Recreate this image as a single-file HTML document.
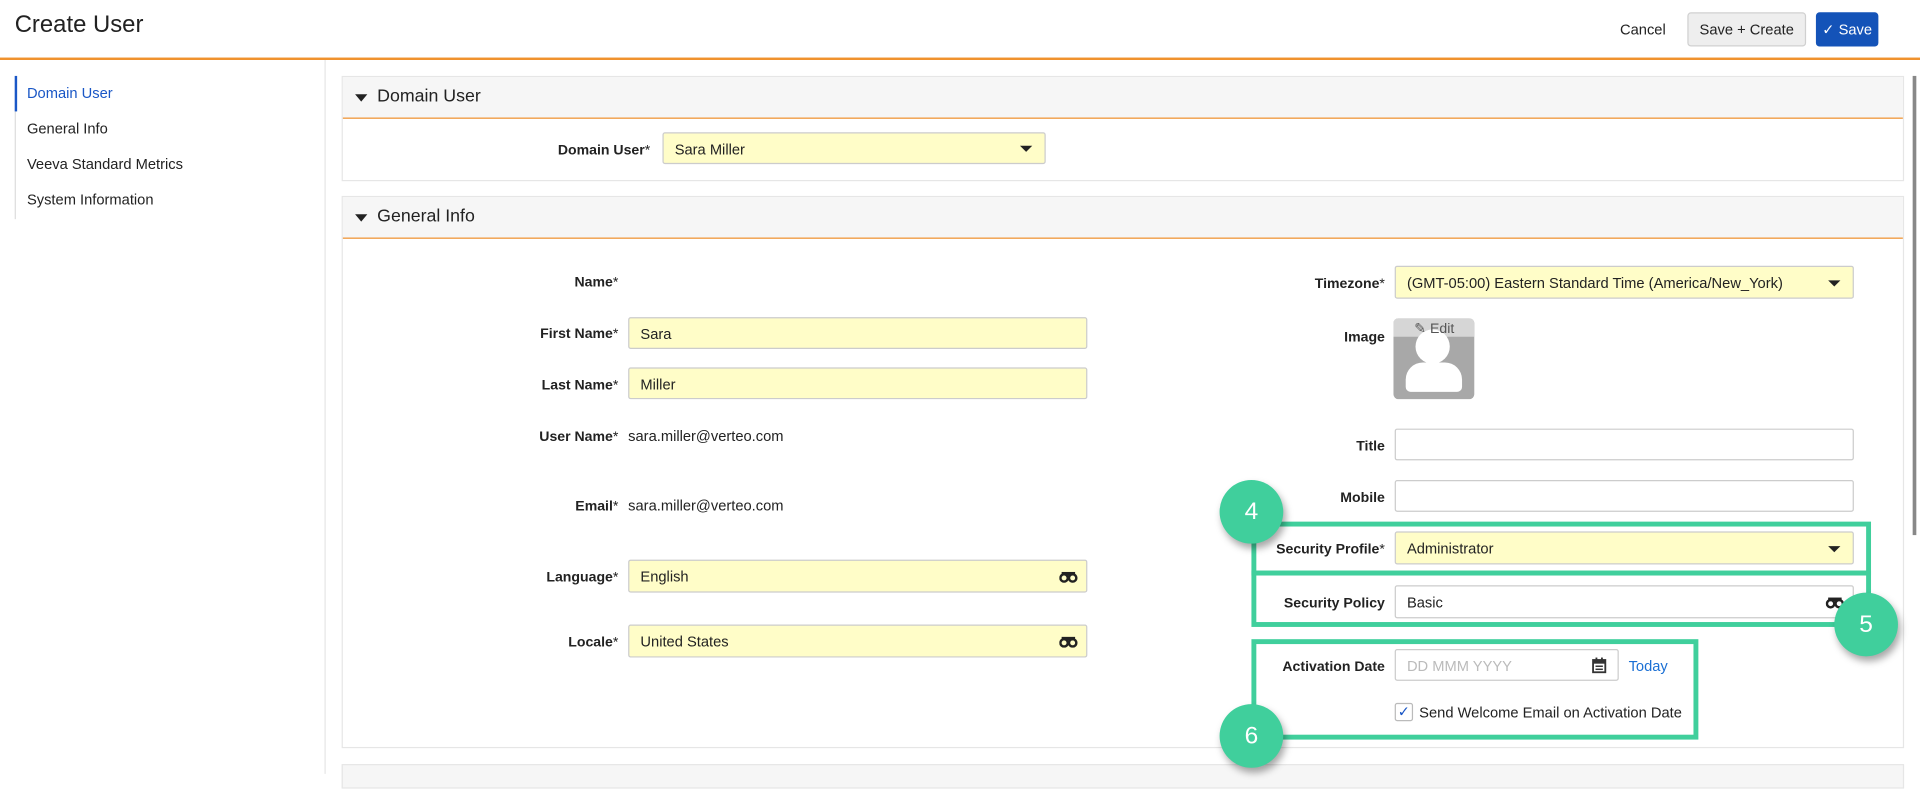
<!DOCTYPE html>
<html><head><meta charset="utf-8"><style>
html,body{margin:0;padding:0;background:#fff;overflow:hidden;width:1920px;height:774px}
#s{position:absolute;left:0;top:0;width:1568px;height:632px;transform:scale(1.22449);transform-origin:0 0;font-family:"Liberation Sans",Arial,sans-serif;color:#222;font-size:12px}
.a{position:absolute}
.lbl{position:absolute;font-weight:bold;font-size:11.5px;text-align:right;white-space:nowrap;margin-top:2px}
.lbl span{font-weight:normal}
.f{position:absolute;height:25px;border:1px solid #ccc;border-radius:2px;background:#fff;box-sizing:border-box;display:flex;align-items:center;padding-left:9px;padding-top:1px;font-size:12px}
.y{background:#fffdc8}
.caret{position:absolute;right:10px;top:50%;margin-top:-2px;width:0;height:0;border-left:5px solid transparent;border-right:5px solid transparent;border-top:5px solid #222}
.bino{position:absolute;right:7px;top:50%;margin-top:-4px}
.panel{position:absolute;left:279px;width:1276px;border:1px solid #e6e6e6;box-sizing:border-box}
.ph{position:absolute;left:0;top:0;right:0;height:33px;background:#f6f6f6;border-bottom:1px solid #f0922e}
.ph .t{position:absolute;left:28px;top:8px;font-size:14.5px}
.ph .tri{position:absolute;left:10px;top:14px;border-left:5px solid transparent;border-right:5px solid transparent;border-top:6px solid #222}
.g{position:absolute;border:4px solid #40cf9c;box-sizing:border-box}
.c{position:absolute;width:52px;height:52px;border-radius:50%;background:#40cf9c;color:#fff;font-size:20px;text-align:center;line-height:52px;box-shadow:2px 4px 6px rgba(0,0,0,.35)}
</style></head><body><div id="s">
<div class="a" style="left:12px;top:9px;font-size:19.5px">Create User</div>
<div class="a" style="left:1323px;top:17px">Cancel</div>
<div class="a" style="left:1378px;top:10px;width:97px;height:28px;box-sizing:border-box;background:#eee;border:1px solid #d0d0d0;border-radius:3px;text-align:center;line-height:26px">Save + Create</div>
<div class="a" style="left:1483px;top:10px;width:51px;height:28px;background:#1453b8;border-radius:3px;color:#fff;line-height:28px;text-align:center">&#10003; Save</div>
<div class="a" style="left:0;top:47px;width:1568px;height:2px;background:#f0922e"></div>
<div class="a" style="left:265px;top:49px;width:1px;height:583px;background:#e6e6e6"></div>
<div class="a" style="left:12px;top:91px;width:1px;height:88px;background:#ddd"></div>
<div class="a" style="left:12px;top:62px;width:2px;height:29px;background:#1a57c6"></div>
<div class="a" style="left:22px;top:69px;color:#1a57c6">Domain User</div>
<div class="a" style="left:22px;top:98px">General Info</div>
<div class="a" style="left:22px;top:127px">Veeva Standard Metrics</div>
<div class="a" style="left:22px;top:156px">System Information</div>
<div class="a" style="left:1562px;top:62px;width:3px;height:375px;background:#888"></div>

<div class="panel" style="top:62px;height:86px"><div class="ph"><div class="tri"></div><div class="t">Domain User</div></div></div>
<div class="lbl" style="right:1037px;top:115px">Domain User<span>*</span></div>
<div class="f y" style="left:541px;top:108px;width:313px;height:26px">Sara Miller<div class="caret"></div></div>

<div class="panel" style="top:160px;height:451px"><div class="ph"><div class="tri"></div><div class="t">General Info</div></div></div>
<div class="panel" style="top:624px;height:20px;background:#f6f6f6"></div>

<div class="lbl" style="right:1063px;top:223px">Name<span>*</span></div>
<div class="lbl" style="right:1063px;top:265px">First Name<span>*</span></div>
<div class="f y" style="left:513px;top:259px;width:375px;height:26px">Sara</div>
<div class="lbl" style="right:1063px;top:307px">Last Name<span>*</span></div>
<div class="f y" style="left:513px;top:300px;width:375px;height:26px">Miller</div>
<div class="lbl" style="right:1063px;top:349px">User Name<span>*</span></div>
<div class="a" style="left:513px;top:349px">sara.miller@verteo.com</div>
<div class="lbl" style="right:1063px;top:406px">Email<span>*</span></div>
<div class="a" style="left:513px;top:406px">sara.miller@verteo.com</div>
<div class="lbl" style="right:1063px;top:464px">Language<span>*</span></div>
<div class="f y" style="left:513px;top:457px;width:375px;height:27px">English<svg class="bino" width="15" height="9" viewBox="0 0 15 9"><circle cx="4" cy="5" r="3" fill="none" stroke="#222" stroke-width="2"/><circle cx="11" cy="5" r="3" fill="none" stroke="#222" stroke-width="2"/><rect x="2" y="0" width="11" height="3" fill="#222"/></svg></div>
<div class="lbl" style="right:1063px;top:517px">Locale<span>*</span></div>
<div class="f y" style="left:513px;top:510px;width:375px;height:27px">United States<svg class="bino" width="15" height="9" viewBox="0 0 15 9"><circle cx="4" cy="5" r="3" fill="none" stroke="#222" stroke-width="2"/><circle cx="11" cy="5" r="3" fill="none" stroke="#222" stroke-width="2"/><rect x="2" y="0" width="11" height="3" fill="#222"/></svg></div>

<div class="lbl" style="right:437px;top:224px">Timezone<span>*</span></div>
<div class="f y" style="left:1139px;top:217px;width:375px;height:27px">(GMT-05:00) Eastern Standard Time (America/New_York)<div class="caret"></div></div>
<div class="lbl" style="right:437px;top:268px">Image</div>
<div class="a" style="left:1138px;top:260px;width:66px;height:66px;background:#a8a8a8;border-radius:4px;overflow:hidden">
<div class="a" style="left:0;top:0;width:66px;height:15px;background:#d6d6d6"></div>
<div class="a" style="left:18px;top:9px;width:28px;height:28px;border-radius:50%;background:#fff"></div>
<div class="a" style="left:10px;top:36px;width:46px;height:24px;border-radius:14px 14px 4px 4px;background:#fff"></div>
<div class="a" style="left:17px;top:1px;font-size:11.5px;color:#555">&#9998; Edit</div></div>
<div class="lbl" style="right:437px;top:357px">Title</div>
<div class="f" style="left:1139px;top:350px;width:375px;height:26px"></div>
<div class="lbl" style="right:437px;top:399px">Mobile</div>
<div class="f" style="left:1139px;top:392px;width:375px;height:26px"></div>
<div class="lbl" style="right:437px;top:441px">Security Profile<span>*</span></div>
<div class="f y" style="left:1139px;top:434px;width:375px;height:27px">Administrator<div class="caret"></div></div>
<div class="lbl" style="right:437px;top:485px">Security Policy</div>
<div class="f" style="left:1139px;top:478px;width:375px;height:27px">Basic<svg class="bino" width="15" height="9" viewBox="0 0 15 9"><circle cx="4" cy="5" r="3" fill="none" stroke="#222" stroke-width="2"/><circle cx="11" cy="5" r="3" fill="none" stroke="#222" stroke-width="2"/><rect x="2" y="0" width="11" height="3" fill="#222"/></svg></div>
<div class="lbl" style="right:437px;top:537px">Activation Date</div>
<div class="f" style="left:1139px;top:530px;width:183px;height:26px;color:#bbb">DD MMM YYYY<svg class="a" style="right:9px;top:6px" width="12" height="13" viewBox="0 0 12 13"><rect x="1" y="2" width="10" height="10" fill="none" stroke="#333" stroke-width="1.5"/><rect x="1" y="2" width="10" height="3" fill="#333"/><rect x="3" y="0" width="1.5" height="3" fill="#333"/><rect x="7.5" y="0" width="1.5" height="3" fill="#333"/><rect x="3" y="6.5" width="6" height="1.2" fill="#333"/><rect x="3" y="9" width="6" height="1.2" fill="#333"/></svg></div>
<div class="a" style="left:1330px;top:537px;color:#1a6fd4">Today</div>
<div class="a" style="left:1139px;top:574px;width:15px;height:15px;border:1px solid #bbb;border-radius:2px;box-sizing:border-box;color:#1a57c6;font-size:12px;line-height:13px;text-align:center">&#10003;</div>
<div class="a" style="left:1159px;top:575px">Send Welcome Email on Activation Date</div>

<div class="g" style="left:1022px;top:426px;width:506px;height:44px"></div>
<div class="g" style="left:1022px;top:466px;width:506px;height:46px"></div>
<div class="g" style="left:1022px;top:522px;width:365px;height:82px"></div>
<div class="c" style="left:996px;top:392px">4</div>
<div class="c" style="left:1498px;top:484px">5</div>
<div class="c" style="left:996px;top:575px">6</div>
</div></body></html>
